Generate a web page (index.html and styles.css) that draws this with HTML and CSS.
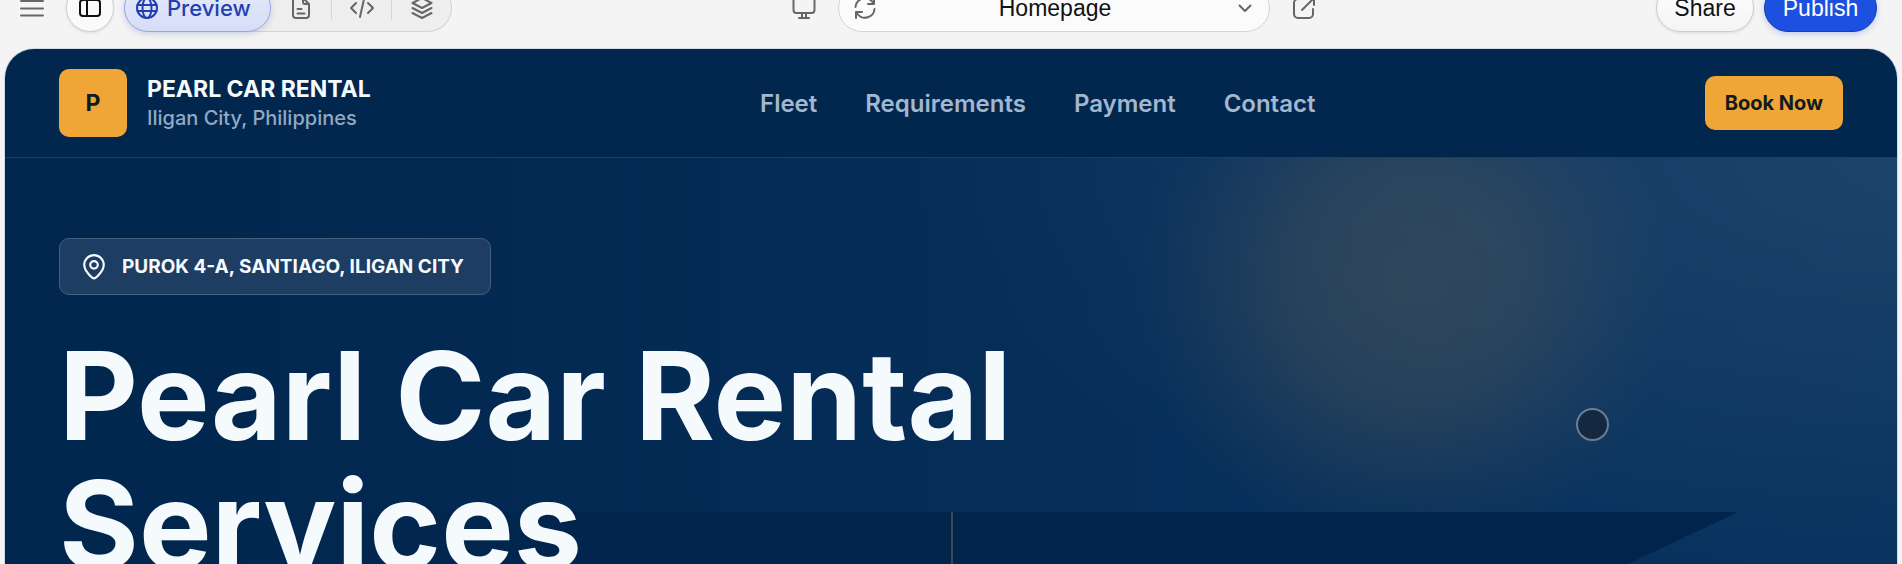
FILE: index.html
```
<!DOCTYPE html>
<html lang="en">
<head>
<meta charset="utf-8">
<meta name="viewport" content="width=device-width, initial-scale=1">
<title>Pearl Car Rental</title>
<link rel="stylesheet" href="styles.css">
</head>
<body>
<div class="toolbar">
  <div class="tools">
    <button class="menu" aria-label="Menu"><svg width="24" height="24" viewBox="0 0 24 24"><path d="M1 5h22M1 12.500h22M1 19.500h22"/></svg></button>
    <button class="round" aria-label="Toggle sidebar"><svg class="dark" width="24" height="24" viewBox="0 0 24 24"><rect x="2" y="4" width="20" height="16" rx="3"/><path d="M9 4v16"/></svg></button>
    <div class="views">
      <button class="view active"><svg width="24" height="24" viewBox="0 0 24 24"><circle cx="12" cy="12" r="10"/><ellipse cx="12" cy="12" rx="4.500" ry="10"/><path d="M2.500 9h19M2.500 15h19"/></svg>Preview</button>
      <button class="view" aria-label="Page"><svg width="24" height="24" viewBox="0 0 24 24"><path d="M14 2H7a3 3 0 0 0-3 3v14a3 3 0 0 0 3 3h10a3 3 0 0 0 3-3V8zM14 2v4a2 2 0 0 0 2 2h4M8.500 13h4M8.500 17.500h7"/></svg></button>
      <button class="view" aria-label="Code"><svg width="24" height="24" viewBox="0 0 24 24"><path d="M6 7l-5 5 5 5M18 7l5 5-5 5M14 3l-4 18"/></svg></button>
      <button class="view" aria-label="Layers"><svg width="24" height="24" viewBox="0 0 24 24"><path d="M12 2L21.500 7 12 12 2.500 7zM2.500 12l9.500 5 9.500-5M2.500 17l9.500 5 9.500-5"/></svg></button>
    </div>
  </div>
  <div class="address">
    <button class="icon" aria-label="Desktop size"><svg width="24" height="24" viewBox="0 0 24 24"><rect x="1.500" y="1" width="21" height="16" rx="3"/><path d="M10 17v4M14 17v4M7 22h10"/></svg></button>
    <div class="page-picker">
      <button class="icon" aria-label="Reload"><svg width="24" height="24" viewBox="0 0 24 24"><path d="M2.500 11a9.500 9.500 0 0 1 17-5L21 8M21 2v6h-6M21.500 13a9.500 9.500 0 0 1-17 5L3 16M3 22v-6h6"/></svg></button>
      <button class="page-name">Homepage</button>
      <button class="icon" aria-label="Choose page"><svg width="24" height="24" viewBox="0 0 24 24"><path d="M6.500 9.500L12 15l5.500-5.500"/></svg></button>
    </div>
    <button class="icon" aria-label="Open in new tab"><svg width="24" height="24" viewBox="0 0 24 24"><path d="M11 3H6a4 4 0 0 0-4 4v11a4 4 0 0 0 4 4h11a4 4 0 0 0 4-4v-5M15 2h7v7M22 2L10 14"/></svg></button>
  </div>
  <div class="actions">
    <button class="share">Share</button>
    <button class="publish">Publish</button>
  </div>
</div>
<div class="site">
  <header class="header">
    <a class="brand" href="#">
      <span class="mark">P</span>
      <span class="brand-text"><strong class="brand-name">PEARL CAR RENTAL</strong><span class="brand-place">Iligan City, Philippines</span></span>
    </a>
    <nav class="nav">
      <a href="#fleet">Fleet</a>
      <a href="#requirements">Requirements</a>
      <a href="#payment">Payment</a>
      <a href="#contact">Contact</a>
    </nav>
    <a class="book" href="#book">Book Now</a>
  </header>
  <main class="hero">
    <div class="road"></div>
    <div class="location"><svg width="26" height="26" viewBox="0 0 24 24"><path d="M12 22.500c-1.500 0-9-6.500-9-12.500a9 9 0 0 1 18 0c0 6-7.500 12.500-9 12.500z"/><circle cx="12" cy="10" r="3.500"/></svg>PUROK 4-A, SANTIAGO, ILIGAN CITY</div>
    <h1 class="title">Pearl Car Rental Services</h1>
    <span class="cursor"></span>
  </main>
</div>
</body>
</html>
```
FILE: styles.css
```
* { box-sizing: border-box; }
body {
  display: flex;
  flex-direction: column;
  margin: 0;
  height: 100vh;
  overflow: hidden;
  background: #f4f4f4;
  font-family: Inter, "Liberation Sans", sans-serif;
}
button {
  display: flex;
  align-items: center;
  justify-content: center;
  margin: 0;
  padding: 0;
  border: 0;
  background: none;
  color: #111;
  font: 23px/24px "Liberation Sans", sans-serif;
}
a { color: inherit; text-decoration: none; }
svg { flex: none; fill: none; stroke: #666; stroke-width: 2; stroke-linecap: round; stroke-linejoin: round; }

/* The toolbar is scrolled partly out of view */
.toolbar {
  display: flex;
  align-items: center;
  justify-content: space-between;
  margin-top: -16px;
  padding: 0 25px 17px 20px;
}
.tools, .address, .actions, .views, .page-picker { display: flex; align-items: center; }
.menu { width: 24px; margin-right: 22px; }
.round {
  width: 48px;
  height: 48px;
  margin-right: 10px;
  border: 1px solid #d0d0d0;
  border-radius: 50%;
  background: #fafafa;
  box-shadow: 0 1px 3px #0000001a;
}
.dark { stroke: #111; }
.views {
  height: 48px;
  padding-right: 1px;
  border-radius: 24px;
  background: #eee;
  box-shadow: inset 0 0 0 1px #d4d4d4;
}
.view { width: 60px; height: 24px; }
.view + .view + .view { border-left: 1px solid #d4d4d4; }
.view.active {
  justify-content: flex-start;
  gap: 8px;
  width: 147px;
  height: 48px;
  padding-left: 10px;
  border: 1px solid #93aae8;
  border-radius: 24px;
  background: linear-gradient(#e6eaf9, #d5ddf7);
  color: #2340b0;
  font-family: Inter, sans-serif;
  font-size: 22px;
  font-weight: 500;
  box-shadow: 0 2px 6px #2340b033;
}
.active svg { stroke: #2340b0; }
.address { gap: 22px; }
.page-picker {
  width: 432px;
  height: 48px;
  padding: 0 12px 0 14px;
  border: 1px solid #d4d4d4;
  border-radius: 24px;
  background: #fbfbfb;
}
.page-name { flex: 1; }
.actions { gap: 10px; }
.share, .publish { height: 48px; border-radius: 24px; }
.share {
  width: 98px;
  border: 1px solid #ccc;
  background: linear-gradient(#fff, #f4f4f4);
  box-shadow: 0 1px 3px #0000001a;
}
.publish {
  width: 113px;
  border: 1px solid #1a3cb8;
  background: #1d4fe0;
  color: #fff;
  box-shadow: 0 2px 6px #1d4fe040;
}

.site {
  display: flex;
  flex: 1;
  flex-direction: column;
  min-height: 0;
  margin: 0 5px;
  overflow: hidden;
  border-radius: 29px 29px 0 0;
  background: #02274f;
  color: #f5fafd;
  box-shadow: 0 0 0 1px #cfdae4;
}
.header {
  display: flex;
  align-items: center;
  justify-content: space-between;
  padding: 20px 54px;
  border-bottom: 1px solid #1d3d62;
}
.brand { display: flex; align-items: center; gap: 20px; }
.mark {
  display: grid;
  place-items: center;
  width: 68px;
  height: 68px;
  border-radius: 10px;
  background: #f0a636;
  color: #111a20;
  font-size: 23px;
  font-weight: 700;
}
.brand-text { display: flex; flex-direction: column; }
.brand-name { font-size: 23px; font-weight: 700; line-height: 29px; }
.brand-place { color: #93a9c2; font-size: 20px; font-weight: 500; line-height: 28px; }
.nav { display: flex; gap: 48px; color: #a3b7ce; font-size: 24px; font-weight: 600; }
.book {
  padding: 15px 20px;
  border-radius: 10px;
  background: #f0a636;
  color: #111a20;
  font-size: 20px;
  font-weight: 700;
  line-height: 24px;
}

.hero {
  position: relative;
  flex: 1;
  min-height: 0;
  padding: 80px 54px;
  overflow: hidden;
  background:
    radial-gradient(circle at 74% 130px, #f0a63624 0, #f0a6361c 110px, #f0a6360b 200px, #f0a63600 270px),
    radial-gradient(ellipse 1000px 440px at 100% 0, #ffffff16, #ffffff00),
    linear-gradient(90deg, #02274f 10%, #07305c 70%, #07325e);
}
.road {
  position: absolute;
  inset: 354px 0 0 0;
  background: linear-gradient(90deg, #00244b00 15%, #00244b 35%);
  clip-path: polygon(0 0, 1733px 0, 1623px 100%, 0 100%);
}
.road::after {
  content: "";
  position: absolute;
  top: 0;
  bottom: 0;
  left: 50%;
  width: 2px;
  background: #3c4850;
}
.location {
  position: relative;
  display: inline-flex;
  align-items: center;
  gap: 15px;
  padding: 14px 26px 14px 21px;
  border: 1px solid #45607e;
  border-radius: 10px;
  background: #1e3d62;
  font-size: 19px;
  font-weight: 700;
  line-height: 27px;
}
.location svg { stroke: #f5fafd; }
.title {
  position: relative;
  max-width: 1100px;
  margin: 36px 0 0;
  font-size: 122px;
  font-weight: 700;
  line-height: 129px;
}
.cursor {
  position: absolute;
  top: 250px;
  left: 1571px;
  width: 33px;
  height: 33px;
  border: 2px solid #6b7d93;
  border-radius: 50%;
  background: #14283f;
}
```
